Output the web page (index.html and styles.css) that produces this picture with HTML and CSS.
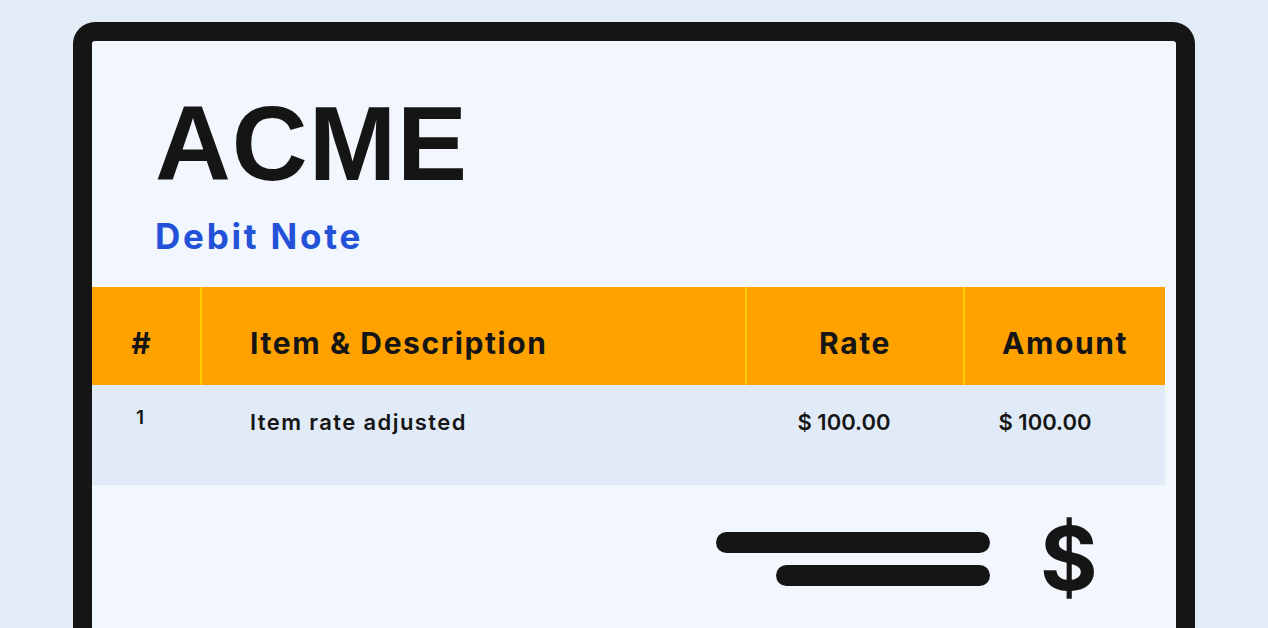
FILE: index.html
```html
<!DOCTYPE html>
<html>
<head>
<meta charset="utf-8">
<link rel="stylesheet" href="styles.css">
</head>
<body>
<div class="frame">
  <div class="brand">
    <div class="logo">ACME</div>
    <div class="doc-title">Debit Note</div>
  </div>
  <div class="table">
    <div class="thead">
      <div class="c c1">#</div>
      <div class="c c2">Item &amp; Description</div>
      <div class="c c3">Rate</div>
      <div class="c c4">Amount</div>
    </div>
    <div class="trow">
      <div class="c c1 num">1</div>
      <div class="c c2">Item rate adjusted</div>
      <div class="c c3 money">$ 100.00</div>
      <div class="c c4 money">$ 100.00</div>
    </div>
  </div>
  <div class="total">
    <div class="bars">
      <div class="bar bar-long"></div>
      <div class="bar bar-short"></div>
    </div>
    <div class="dollar">$</div>
  </div>
</div>
</body>
</html>
```

FILE: styles.css
```css
html, body {
  margin: 0;
  padding: 0;
}
body {
  background: #e2ecf7;
  height: 628px;
  overflow: hidden;
  font-family: Inter, "Work Sans", "Noto Sans", sans-serif;
  color: #151515;
}
.frame {
  margin: 22px 0 0 73px;
  width: 1084px;
  height: 587px;
  border: 19px solid #151515;
  border-bottom: none;
  border-radius: 22px 22px 0 0;
  background: #f2f6fd;
}
.brand {
  padding: 50px 0 0 63px;
  height: 246px;
  box-sizing: border-box;
}
.logo {
  font-family: "Liberation Sans", Arial, sans-serif;
  font-weight: 700;
  font-size: 105px;
  line-height: 1;
  letter-spacing: 1px;
}
.doc-title {
  color: #2352d9;
  font-weight: 700;
  font-size: 35px;
  line-height: 1;
  letter-spacing: 2.8px;
  margin-top: 23px;
}
.table {
  width: 1073px;
}
.thead {
  display: flex;
  background: #ffa200;
  height: 98px;
  align-items: stretch;
}
.thead .c {
  display: flex;
  align-items: center;
  font-weight: 700;
  font-size: 30px;
  letter-spacing: 1.6px;
  padding-top: 13px;
  box-sizing: border-box;
}
.thead .c + .c {
  border-left: 2px solid #ffc900;
}
.c1 { width: 108px; justify-content: center; }
.c2 { width: 545px; padding-left: 48px; box-sizing: border-box; }
.c3 { width: 218px; justify-content: center; }
.c4 { width: 202px; justify-content: center; }
.thead .c1 { padding-right: 10px; letter-spacing: 0; }
.trow {
  display: flex;
  background: #e1ebf7;
  height: 100px;
}
.trow .c {
  display: flex;
  font-weight: 600;
  font-size: 22px;
  padding-top: 26px;
  box-sizing: border-box;
  line-height: 1;
}
.trow .c + .c { border-left: 2px solid transparent; }
.trow .c2 { letter-spacing: 1.4px; }
.trow .num {
  font-size: 19px;
  padding-top: 23px;
  padding-right: 12px;
}
.trow .c3 { padding-right: 22px; }
.trow .c4 { padding-right: 40px; }
.total {
  display: flex;
  align-items: flex-start;
  padding: 33px 0 0 624px;
}
.bars {
  width: 274px;
  display: flex;
  flex-direction: column;
  align-items: flex-end;
  gap: 12px;
  padding-top: 14px;
}
.bar {
  height: 21px;
  border-radius: 11px;
  background: #151515;
}
.bar-long { width: 274px; }
.bar-short { width: 214px; }
.dollar {
  font-weight: 700;
  font-size: 88px;
  line-height: 1;
  margin-left: 50px;
  margin-top: -4px;
}
```
